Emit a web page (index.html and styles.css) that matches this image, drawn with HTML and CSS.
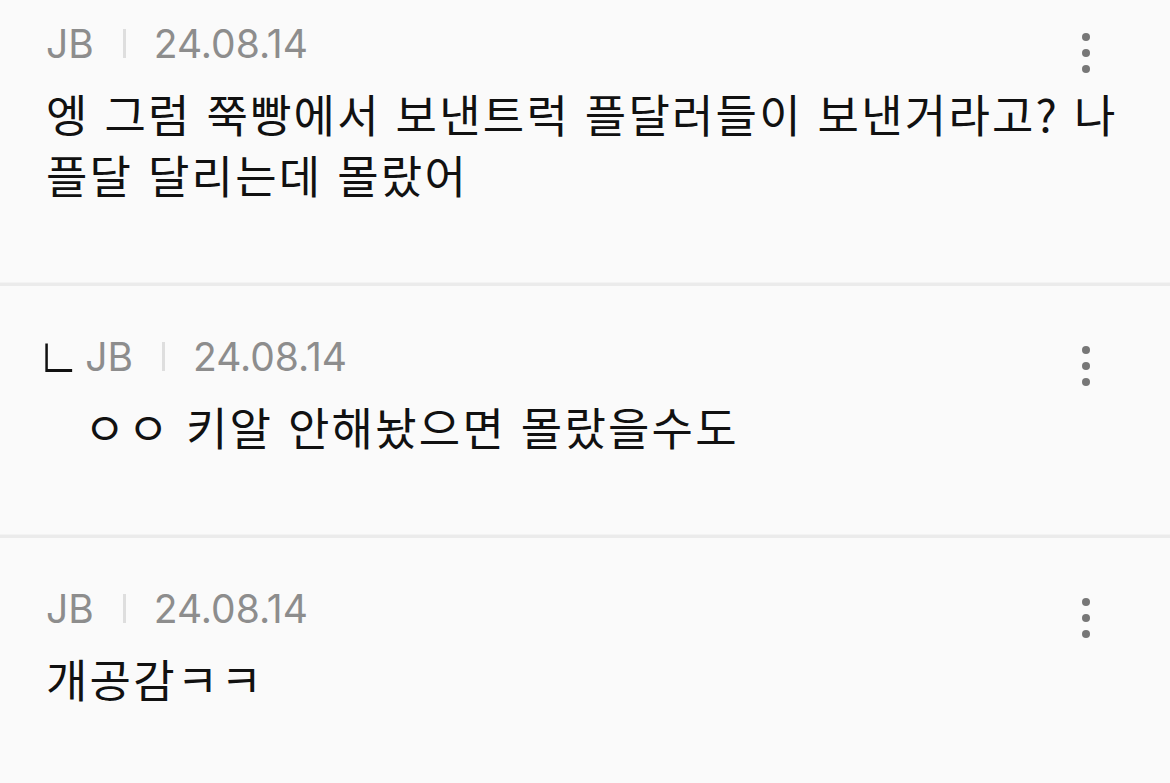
FILE: index.html
```html
<!DOCTYPE html>
<html lang="ko">
<head>
  <meta charset="UTF-8">
  <meta name="viewport" content="width=device-width, initial-scale=1.0">
  <title>댓글</title>
  <link rel="stylesheet" href="styles.css">
</head>
<body>
  <!-- Comment list -->
  <section class="comments">
    <div class="comment first">
      <div class="meta">
        <span class="author">JB</span>
        <span class="divider"></span>
        <span class="date">24.08.14</span>
        <button class="more" aria-label="더보기"><i></i><i></i><i></i></button>
      </div>
      <p class="body">엥 그럼 쭉빵에서 보낸트럭 플달러들이 보낸거라고? 나 플달 달리는데 몰랐어</p>
    </div>

    <div class="comment reply">
      <div class="meta">
        <span class="reply-mark">ㄴ</span>
        <span class="author">JB</span>
        <span class="divider"></span>
        <span class="date">24.08.14</span>
        <button class="more" aria-label="더보기"><i></i><i></i><i></i></button>
      </div>
      <p class="body">ㅇㅇ 키알 안해놨으면 몰랐을수도</p>
    </div>

    <div class="comment">
      <div class="meta">
        <span class="author">JB</span>
        <span class="divider"></span>
        <span class="date">24.08.14</span>
        <button class="more" aria-label="더보기"><i></i><i></i><i></i></button>
      </div>
      <p class="body">개공감ㅋㅋ</p>
    </div>
  </section>
</body>
</html>
```

FILE: styles.css
```css
* {
    margin: 0;
    padding: 0;
    box-sizing: border-box;
}

body {
    background-color: #fafafa;
    font-family: "Noto Sans CJK KR", "Noto Sans", sans-serif;
    color: #111;
    overflow: hidden;
}

/* Comment list */
.comments {
    margin-top: -27px; /* screenshot starts mid-comment */
}

.comment {
    padding: 50px 0 78px 46px;
    border-bottom: 3px solid #ebebeb;
    box-shadow: 0 -1px 0 #f3f3f3 inset;
}

/* Meta row: author | date ... */
.meta {
    display: flex;
    align-items: center;
    height: 40px;
    font-family: Inter, "Liberation Sans", sans-serif;
    font-size: 39px;
    color: #8d8d8d;
}

.reply-mark {
    font-family: "Noto Sans CJK KR", sans-serif;
    font-weight: 300;
    color: #111;
    font-size: 48px;
    line-height: 40px;
    margin-left: -10px;
    margin-right: 5px;
    padding-top: 2px;
    transform: scaleY(1.3);
    transform-origin: 50% 80%;
}

.meta .divider {
    flex: none;
    width: 3px;
    height: 29px;
    background-color: #dedede;
    margin: 0 28px 0 29px;
}

.more {
    margin-left: auto;
    margin-right: 80px;
    align-self: flex-start;
    margin-top: 10px;
    width: 8px;
    height: 40px;
    border: none;
    background: none;
    display: flex;
    flex-direction: column;
    justify-content: space-between;
    padding: 0;
}

.more i {
    display: block;
    width: 8px;
    height: 8px;
    border-radius: 50%;
    background-color: #777;
}

.body {
    margin-top: 20px;
    font-size: 45px;
    line-height: 61px;
    letter-spacing: 2.2px;
    word-break: keep-all;
}

.reply .body {
    padding-left: 38px;
}
```
